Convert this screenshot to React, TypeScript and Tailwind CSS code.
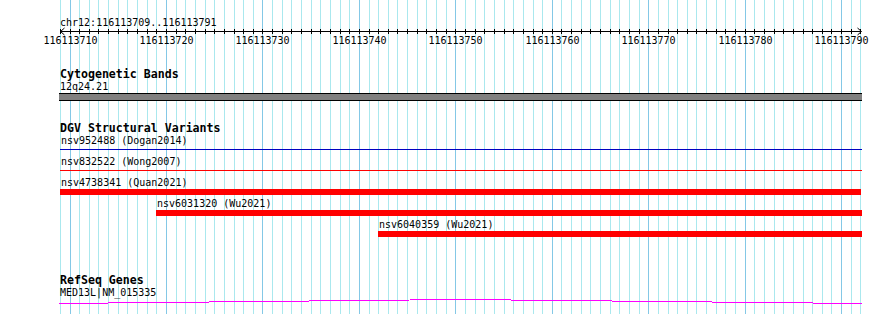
const START = 116113709;
const END = 116113791;
const PX = 9.645;
const X0 = 60.4;
const TRACK_LEFT = 59;

const bpX = (bp: number) => Math.floor(X0 + (bp - START) * PX);

type Variant = {
  id: string;
  study: string;
  start: number;
  thick: boolean;
  color: string;
  short?: boolean;
};

const variants: Variant[] = [
  { id: "nsv952488", study: "Dogan2014", start: START, thick: false, color: "#0000c0" },
  { id: "nsv832522", study: "Wong2007", start: START, thick: false, color: "#ff0000" },
  { id: "nsv4738341", study: "Quan2021", start: START, thick: true, color: "#ff0000", short: true },
  { id: "nsv6031320", study: "Wu2021", start: 116113719, thick: true, color: "#ff0000" },
  { id: "nsv6040359", study: "Wu2021", start: 116113742, thick: true, color: "#ff0000" },
];

const mono = "font-['DejaVu_Sans_Mono','Liberation_Mono',monospace]";

function Grid() {
  const lines = [];
  for (let i = 0; i <= END - START + 1; i++) {
    const bp = START + i;
    const major = bp % 10 === 0;
    lines.push(
      <rect key={i} x={bpX(bp)} y={0} width={1} height={314} fill={major ? "#84c8e6" : "#aae8ee"} />
    );
  }
  return (
    <svg className="absolute inset-0" width={890} height={314} shapeRendering="crispEdges">
      {lines}
    </svg>
  );
}

function Ruler() {
  const ticks = [];
  const labels = [];
  for (let bp = START; bp <= END + 1; bp++) {
    const x = bpX(bp);
    ticks.push(<rect key={bp} x={x} y={29} width={1} height={5} fill="#000" />);
    if (bp % 10 === 0) {
      labels.push(
        <text key={bp} x={x + 0.5} y={44} textAnchor="middle" fontSize={10} fill="#000" fontFamily="DejaVu Sans Mono, Liberation Mono, monospace">
          {bp}
        </text>
      );
    }
  }
  return (
    <svg width={890} height={48} className="block">
      <text x={60} y={26} fontSize={10} fill="#000" fontFamily="DejaVu Sans Mono, Liberation Mono, monospace">
        chr12:{START}..{END}
      </text>
      <g shapeRendering="crispEdges">
        <rect x={60} y={31} width={801} height={1} fill="#000" />
        {ticks}
      </g>
      <polyline points="64.5,28 60.5,31.5 64.5,35" fill="none" stroke="#000" strokeWidth={1} />
      <polyline points="857.5,28 861.5,31.5 857.5,35" fill="none" stroke="#000" strokeWidth={1} />
      {labels}
    </svg>
  );
}

function Title({ children }: { children: React.ReactNode }) {
  return <div className={`${mono} pl-px text-[11.6px] leading-[14px] font-bold text-black`}>{children}</div>;
}

function Label({ children }: { children: React.ReactNode }) {
  return <div className={`${mono} pl-px text-[10px] leading-[12px] whitespace-nowrap text-black`}>{children}</div>;
}

export default function App() {
  return (
    <div className="relative h-[314px] w-[890px] overflow-hidden bg-white">
      <Grid />
      <div className="relative">
        <Ruler />

        <div className="mt-[19px] w-[803px]" style={{ marginLeft: TRACK_LEFT }}>
          <Title>Cytogenetic Bands</Title>
          <Label>12q24.21</Label>
          <div className="h-[8px] border-y border-black bg-[#808080]" />
        </div>

        <div className="mt-[20px] w-[803px]" style={{ marginLeft: TRACK_LEFT }}>
          <Title>DGV Structural Variants</Title>
          {variants.map((v, i) => (
            <div
              key={v.id}
              className={i === 0 ? "" : v.thick && variants[i - 1].thick ? "mt-[3px]" : "mt-[6px]"}
              style={{ marginLeft: bpX(v.start) - TRACK_LEFT }}
            >
              <Label>
                {v.id} ({v.study})
              </Label>
              {v.thick ? (
                <div className={`h-[6px] ${v.short ? "mr-px" : ""}`} style={{ backgroundColor: v.color }} />
              ) : (
                <div className="mt-[2px] h-px" style={{ backgroundColor: v.color }} />
              )}
            </div>
          ))}
        </div>

        <div className="mt-[36px] w-[803px]" style={{ marginLeft: TRACK_LEFT }}>
          <Title>RefSeq Genes</Title>
          <Label>MED13L|NM_015335</Label>
          <svg width={803} height={6} className="block" shapeRendering="crispEdges">
            <polyline points="0,4.5 401,0.5 803,4.5" fill="none" stroke="#ff00ff" strokeWidth={1} />
          </svg>
        </div>
      </div>
    </div>
  );
}
